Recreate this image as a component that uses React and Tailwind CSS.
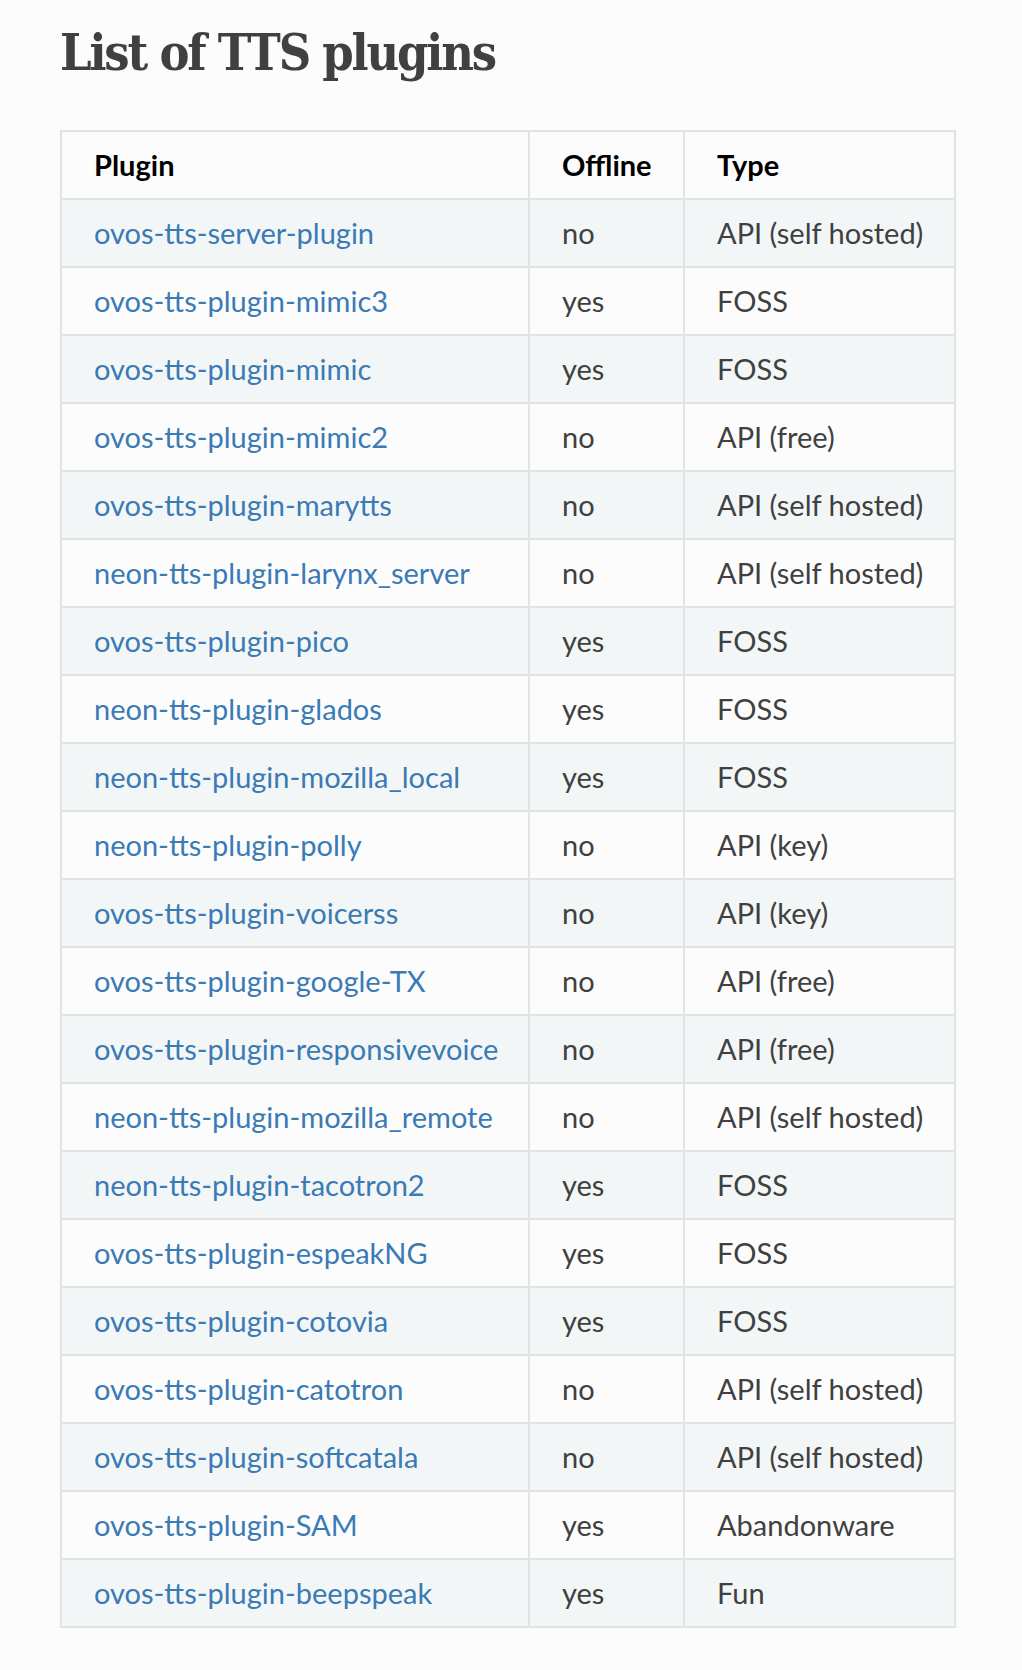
import React from "react";

const plugins = [
  ["ovos-tts-server-plugin", "no", "API (self hosted)"],
  ["ovos-tts-plugin-mimic3", "yes", "FOSS"],
  ["ovos-tts-plugin-mimic", "yes", "FOSS"],
  ["ovos-tts-plugin-mimic2", "no", "API (free)"],
  ["ovos-tts-plugin-marytts", "no", "API (self hosted)"],
  ["neon-tts-plugin-larynx_server", "no", "API (self hosted)"],
  ["ovos-tts-plugin-pico", "yes", "FOSS"],
  ["neon-tts-plugin-glados", "yes", "FOSS"],
  ["neon-tts-plugin-mozilla_local", "yes", "FOSS"],
  ["neon-tts-plugin-polly", "no", "API (key)"],
  ["ovos-tts-plugin-voicerss", "no", "API (key)"],
  ["ovos-tts-plugin-google-TX", "no", "API (free)"],
  ["ovos-tts-plugin-responsivevoice", "no", "API (free)"],
  ["neon-tts-plugin-mozilla_remote", "no", "API (self hosted)"],
  ["neon-tts-plugin-tacotron2", "yes", "FOSS"],
  ["ovos-tts-plugin-espeakNG", "yes", "FOSS"],
  ["ovos-tts-plugin-cotovia", "yes", "FOSS"],
  ["ovos-tts-plugin-catotron", "no", "API (self hosted)"],
  ["ovos-tts-plugin-softcatala", "no", "API (self hosted)"],
  ["ovos-tts-plugin-SAM", "yes", "Abandonware"],
  ["ovos-tts-plugin-beepspeak", "yes", "Fun"],
];

const cell = "h-[68px] border-2 border-[#e1e4e5] px-[32px] py-0 align-middle";

const App = () => {
  return (
    <div className="min-h-[1670px] bg-[#fcfcfc] px-[60px] pt-[21px] font-['Lato',sans-serif] text-[#404040]">
      <h1 className="font-['DejaVu_Serif',serif] font-stretch-condensed text-[50px] leading-[64px] font-bold tracking-[-2.2px] text-[#404040]">
        List of TTS plugins
      </h1>
      <table className="mt-[45px] w-[894px] table-fixed border-collapse text-[29px]">
        <colgroup>
          <col className="w-[468px]" />
          <col className="w-[155px]" />
          <col className="w-[271px]" />
        </colgroup>
        <thead>
          <tr className="bg-[#fcfcfc] text-left text-black">
            <th className={`${cell} font-bold`}>Plugin</th>
            <th className={`${cell} font-bold`}>Offline</th>
            <th className={`${cell} font-bold`}>Type</th>
          </tr>
        </thead>
        <tbody>
          {plugins.map(([name, offline, type], i) => (
            <tr key={name} className={i % 2 === 0 ? "bg-[#f3f6f6]" : "bg-[#fcfcfc]"}>
              <td className={`${cell} whitespace-nowrap`}>
                <a href="#" className="text-[#3a7ab5]">
                  {name}
                </a>
              </td>
              <td className={cell}>{offline}</td>
              <td className={`${cell} whitespace-nowrap`}>{type}</td>
            </tr>
          ))}
        </tbody>
      </table>
    </div>
  );
};

export default App;
